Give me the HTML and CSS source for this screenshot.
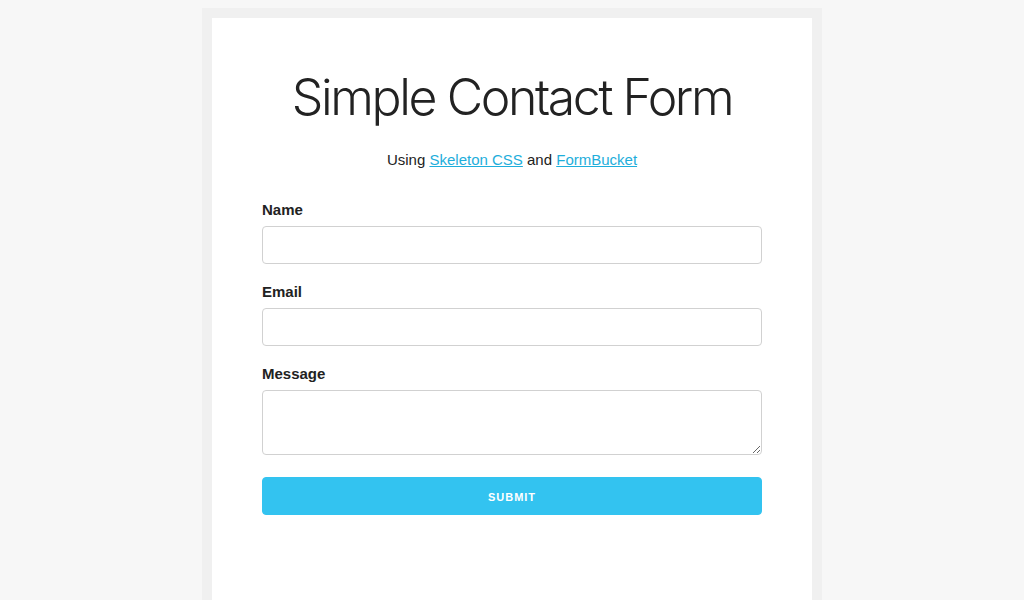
FILE: index.html
```html
<!DOCTYPE html>
<html>
<head>
<meta charset="utf-8">
<title>Simple Contact Form</title>
<link rel="stylesheet" href="styles.css">
</head>
<body>
<div class="frame">
  <div class="card">
    <h1 class="title">Simple Contact Form</h1>
    <p class="subtitle">Using <a href="#">Skeleton CSS</a> and <a href="#">FormBucket</a></p>
    <form class="form">
      <label class="label" for="name">Name</label>
      <input class="field" id="name" type="text">
      <label class="label" for="email">Email</label>
      <input class="field" id="email" type="email">
      <label class="label" for="msg">Message</label>
      <textarea class="field area" id="msg"></textarea>
      <button class="submit" type="button">Submit</button>
    </form>
  </div>
</div>
</body>
</html>
```
FILE: styles.css
```css
html, body {
  margin: 0;
  padding: 0;
}
body {
  background: #f7f7f7;
  font-family: "Liberation Sans", Arial, sans-serif;
  color: #222;
  font-size: 15px;
  line-height: 1.6;
}
.frame {
  width: 600px;
  margin: 8px auto 0;
  border: 10px solid #f0f0f0;
  border-bottom: 0;
  background: #fff;
  min-height: 582px;
}
.card {
  padding: 49px 50px 40px;
}
.title {
  margin: 0 0 21px;
  text-align: center;
  font-family: Inter, "Liberation Sans", sans-serif;
  font-weight: 300;
  font-size: 50px;
  line-height: 1.2;
  letter-spacing: -2.4px;
}
.subtitle {
  margin: 0 0 25px;
  text-align: center;
}
.subtitle a {
  color: #1eaedb;
}
.form {
  display: flex;
  flex-direction: column;
}
.label {
  font-weight: bold;
  padding-top: 1px;
  margin-bottom: 4px;
}
.field {
  box-sizing: border-box;
  height: 38px;
  padding: 6px 10px;
  border: 1px solid #d1d1d1;
  border-radius: 4px;
  background: #fff;
  margin: 0 0 15px;
  font: inherit;
}
.area {
  height: 65px;
  min-height: 65px;
  margin-bottom: 22px;
  resize: vertical;
}
.submit {
  height: 38px;
  border: 1px solid #33c3f0;
  border-radius: 4px;
  background: #33c3f0;
  color: #fff;
  font-family: "Liberation Sans", Arial, sans-serif;
  font-size: 11px;
  font-weight: 700;
  letter-spacing: 1px;
  text-transform: uppercase;
  padding: 1px 30px 0;
}
```
